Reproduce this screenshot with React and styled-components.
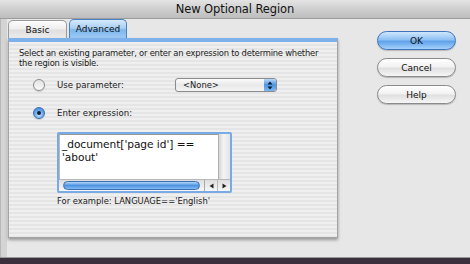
import React from "react";
import styled, { createGlobalStyle } from "styled-components";

const GlobalStyle = createGlobalStyle`
  html, body { margin: 0; padding: 0; }
  body {
    width: 470px; height: 264px; overflow: hidden;
    background: #3b2f3d;
    font-family: "DejaVu Sans", "Liberation Sans", sans-serif;
    color: #1a1a1a;
  }
`;

const Desktop = styled.div`
  width: 470px;
  height: 264px;
  display: flex;
  flex-direction: column;
`;

const Window = styled.div`
  height: 258px;
  display: flex;
  flex-direction: column;
  background: #e7e7e7;
  border-bottom: 1px solid #9a9a9a;
  box-sizing: border-box;
`;

const TitleBar = styled.div`
  height: 19px;
  flex: none;
  display: flex;
  align-items: center;
  justify-content: center;
  background: linear-gradient(#e4e4e4, #cfcfcf 50%, #bdbdbd);
  border-bottom: 1px solid #9c9c9c;
  box-sizing: border-box;
  font-size: 11.5px;
  color: #111;
  letter-spacing: -0.1px;
`;

const Content = styled.div`
  flex: 1;
  display: flex;
  padding-left: 8px;
  background: linear-gradient(to right, #b8b8b8 0 1px, #d4d4d4 1px 7px, #e7e7e7 7px);
`;

const Main = styled.div`
  width: 330px;
  display: flex;
  flex-direction: column;
`;

const TabRow = styled.div`
  height: 19px;
  display: flex;
  align-items: flex-end;
  gap: 2px;
`;

const Tab = styled.div`
  width: ${p => p.$w}px;
  height: ${p => (p.$active ? 19 : 18)}px;
  box-sizing: border-box;
  display: flex;
  align-items: center;
  justify-content: center;
  font-size: 9px;
  color: #111;
  border-radius: 5px 5px 0 0;
  border: 1px solid ${p => (p.$active ? "#4a82c8" : "#9a9a9a")};
  border-bottom: none;
  background: ${p =>
    p.$active
      ? "linear-gradient(#d6e9fb, #a9cff3 45%, #7db6ee 55%, #9fcaf5)"
      : "linear-gradient(#fdfdfd, #eeeeee 45%, #dfdfdf 55%, #ececec)"};
`;

const Panel = styled.div`
  height: 200px;
  box-sizing: border-box;
  border: 1px solid #a4a4a4;
  border-top: 4px solid #7eb0ea;
  box-shadow: 0 2px 3px rgba(0,0,0,0.35);
  background: repeating-linear-gradient(#efefef 0 2px, #e5e5e5 2px 4px);
  padding: 6px 0 0 10px;
  display: flex;
  flex-direction: column;
  font-size: 8.6px;
`;

const Description = styled.div`
  line-height: 10px;
  font-size: 8.4px;
  letter-spacing: -0.22px;
  white-space: nowrap;
`;

const OptionRow = styled.div`
  height: 14px;
  margin-top: ${p => p.$mt}px;
  display: flex;
  align-items: center;
  padding-left: 14px;
`;

const Radio = styled.span`
  width: 12px;
  height: 12px;
  box-sizing: border-box;
  border-radius: 50%;
  flex: none;
  display: flex;
  align-items: center;
  justify-content: center;
  border: 1px solid ${p => (p.$checked ? "#3b6fb5" : "#8c8c8c")};
  background: ${p =>
    p.$checked
      ? "radial-gradient(circle at 50% 70%, #bfe0ff, #5d9ee6 60%, #3f7fd0)"
      : "linear-gradient(#e2e2e2, #fafafa)"};
  box-shadow: 0 1px 1px rgba(0,0,0,0.15);
  &::after {
    content: "";
    width: 4px;
    height: 4px;
    border-radius: 50%;
    background: ${p => (p.$checked ? "#14233a" : "transparent")};
  }
`;

const Label = styled.span`
  margin-left: 12px;
  width: ${p => (p.$w ? `${p.$w}px` : "auto")};
`;

const Select = styled.div`
  width: 102px;
  height: 14px;
  box-sizing: border-box;
  border: 1px solid #8a8a8a;
  border-radius: 3px;
  background: linear-gradient(#fdfdfd, #e8e8e8 50%, #f4f4f4);
  display: flex;
  align-items: center;
  justify-content: space-between;
  padding-left: 7px;
  font-size: 8.4px;
`;

const Stepper = styled.span`
  width: 12px;
  height: 12px;
  border-radius: 0 2px 2px 0;
  background: linear-gradient(#b8dafc, #4f95e3 50%, #7fb7f0);
  display: flex;
  align-items: center;
  justify-content: center;
`;

const Field = styled.div`
  width: 175px;
  height: 61px;
  margin: 12px 0 0 38px;
  box-sizing: border-box;
  border: 2px solid #7aaae6;
  border-radius: 2px;
  background: #fff;
  display: grid;
  grid-template-columns: 1fr 12px;
  grid-template-rows: 1fr 12px;
`;

const FieldText = styled.div`
  padding: 3px 0 0 2px;
  font-size: 10.6px;
  line-height: 13px;
  color: #111;
  border-top: 1px solid #999;
  border-left: 1px solid #bbb;
  letter-spacing: -0.05px;
`;

const VTrack = styled.div`
  background: linear-gradient(to right, #d6d6d6, #f4f4f4 40%, #e4e4e4);
  border-left: 1px solid #b0b0b0;
`;

const HBar = styled.div`
  grid-column: 1 / 3;
  display: flex;
  align-items: center;
  background: linear-gradient(#dedede, #f7f7f7);
  border-top: 1px solid #b8b8b8;
`;

const Thumb = styled.div`
  width: 137px;
  height: 9px;
  margin-left: 4px;
  border-radius: 5px;
  border: 1px solid #3a6fb6;
  box-sizing: border-box;
  background: linear-gradient(#b4d8fb, #4e93e2 50%, #84bbf2);
`;

const Arrows = styled.div`
  margin-left: auto;
  display: flex;
  align-items: center;
  height: 100%;
  border-left: 1px solid #aaa;
`;

const ArrowBtn = styled.span`
  width: 12px;
  height: 100%;
  display: flex;
  align-items: center;
  justify-content: center;
  & + & { border-left: 1px solid #bbb; }
`;

const Example = styled.div`
  margin: 3px 0 0 38px;
  font-size: 8.4px;
  line-height: 10px;
`;

const ButtonColumn = styled.div`
  margin-left: 39px;
  padding-top: 12px;
  display: flex;
  flex-direction: column;
  gap: 8px;
`;

const Button = styled.div`
  width: 79px;
  height: 19px;
  box-sizing: border-box;
  border-radius: 10px;
  display: flex;
  align-items: center;
  justify-content: center;
  font-size: 9px;
  color: #111;
  border: 1px solid ${p => (p.$default ? "#3f74bd" : "#8a8a8a")};
  background: ${p =>
    p.$default
      ? "linear-gradient(#cfe6fd, #8fc1f3 45%, #5fa2ea 55%, #a5d1fa)"
      : "linear-gradient(#ffffff, #f2f2f2 45%, #e0e0e0 55%, #f6f6f6)"};
  box-shadow: 0 1px 1px rgba(0,0,0,0.2);
`;

export default function App() {
  return (
    <>
      <GlobalStyle />
      <Desktop>
        <Window>
          <TitleBar>New Optional Region</TitleBar>
          <Content>
            <Main>
              <TabRow>
                <Tab $w={59}>Basic</Tab>
                <Tab $w={58} $active>Advanced</Tab>
              </TabRow>
              <Panel>
                <Description>
                  Select an existing parameter, or enter an expression to determine whether
                  <br />
                  the region is visible.
                </Description>
                <OptionRow $mt={10}>
                  <Radio />
                  <Label $w={118}>Use parameter:</Label>
                  <Select>
                    <span>&lt;None&gt;</span>
                    <Stepper>
                      <svg width="6" height="9" viewBox="0 0 6 9">
                        <path d="M3 0.5 L5.5 3.5 H0.5 Z M3 8.5 L5.5 5.5 H0.5 Z" fill="#0d1a2e" />
                      </svg>
                    </Stepper>
                  </Select>
                </OptionRow>
                <OptionRow $mt={14}>
                  <Radio $checked />
                  <Label>Enter expression:</Label>
                </OptionRow>
                <Field>
                  <FieldText>
                    _document['page id'] ==
                    <br />
                    'about'
                  </FieldText>
                  <VTrack />
                  <HBar>
                    <Thumb />
                    <Arrows>
                      <ArrowBtn>
                        <svg width="5" height="6" viewBox="0 0 5 6">
                          <path d="M0.5 3 L4.5 0.5 V5.5 Z" fill="#222" />
                        </svg>
                      </ArrowBtn>
                      <ArrowBtn>
                        <svg width="5" height="6" viewBox="0 0 5 6">
                          <path d="M4.5 3 L0.5 0.5 V5.5 Z" fill="#222" />
                        </svg>
                      </ArrowBtn>
                    </Arrows>
                  </HBar>
                </Field>
                <Example>For example: LANGUAGE=='English'</Example>
              </Panel>
            </Main>
            <ButtonColumn>
              <Button $default>OK</Button>
              <Button>Cancel</Button>
              <Button>Help</Button>
            </ButtonColumn>
          </Content>
        </Window>
      </Desktop>
    </>
  );
}
